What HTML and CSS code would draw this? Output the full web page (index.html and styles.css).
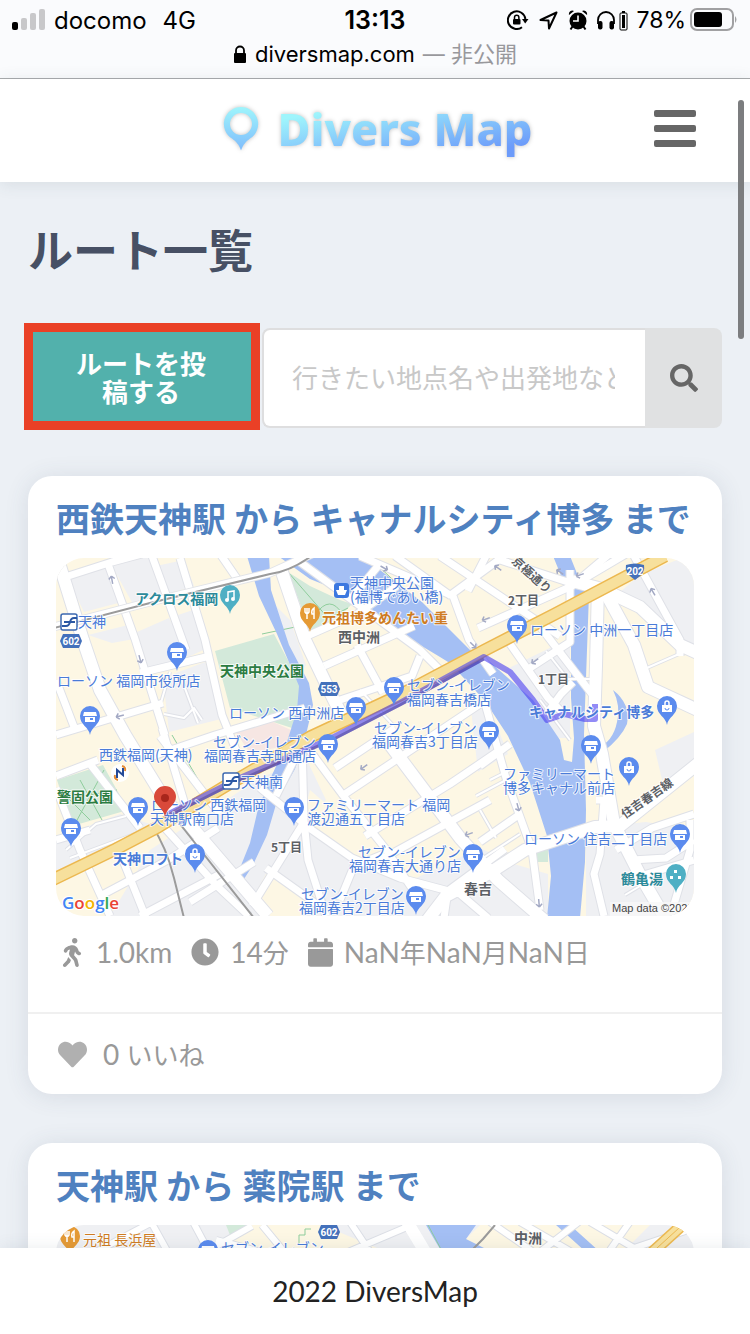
FILE: index.html
```html
<!DOCTYPE html>
<html lang="ja">
<head>
    <meta charset="UTF-8">
    <meta name="viewport" content="width=device-width, initial-scale=1.0">
    <title>Divers Map</title>
    <link rel="stylesheet" href="styles.css">
</head>
<body>
    <!-- ステータスバー -->
    <div class="browser-bar">
        <div class="status">
            <div class="status-left">
                <svg class="signal" width="34" height="22" viewBox="0 0 34 22">
                    <rect x="0" y="13" width="6" height="8" rx="2" fill="#000"/>
                    <rect x="9" y="9" width="6" height="12" rx="2" fill="#c8c8ca"/>
                    <rect x="18" y="4" width="6" height="17" rx="2" fill="#c8c8ca"/>
                    <rect x="27" y="0" width="6" height="21" rx="2" fill="#c8c8ca"/>
                </svg>
                <span>docomo</span>
                <span class="network">4G</span>
            </div>
            <time class="clock">13:13</time>
            <div class="status-right">
                <svg width="22" height="20" viewBox="0 0 22 20" fill="none" stroke="#000" stroke-width="2">
                    <path d="M15 17.2A8.8 8.8 0 1 1 18.4 9"/>
                    <path d="M15 9h6.500l-3.300 4.500z" fill="#000" stroke="none"/>
                    <rect x="6" y="9" width="7.500" height="5.500" rx="1" fill="#000" stroke="none"/>
                    <path d="M7.500 9V7.500a2.200 2.200 0 0 1 4.400 0V9" stroke-width="1.500"/>
                </svg>
                <svg class="arrow" width="19" height="19" viewBox="0 0 19 19" fill="none" stroke="#000" stroke-width="2" stroke-linejoin="round">
                    <path d="M17.500 1.500L1.500 9l8 .5.5 8z"/>
                </svg>
                <svg class="alarm" width="20" height="21" viewBox="0 0 20 21">
                    <circle cx="10" cy="11" r="8.500"/>
                    <path d="M4.500 16.500L2.500 19.500M15.500 16.500L17.500 19.500" stroke="#000" stroke-width="2"/>
                    <path d="M1 5a3.500 3.500 0 0 1 5-4zM19 5a3.500 3.500 0 0 0-5-4z"/>
                    <path d="M10 5.500V11H5" fill="none" stroke="#fff" stroke-width="1.600"/>
                </svg>
                <svg class="phones" width="32" height="21" viewBox="0 0 32 21">
                    <path d="M2 14v-4a8 8 0 0 1 16 0v4" fill="none" stroke="#000" stroke-width="1.800"/>
                    <rect x="2" y="11" width="4.500" height="8.500" rx="2"/>
                    <rect x="13.500" y="11" width="4.500" height="8.500" rx="2"/>
                    <rect x="24" y="3" width="7" height="17" rx="1" fill="none" stroke="#000"/>
                    <rect x="26" y="5" width="3" height="13"/>
                    <rect x="26" y="1" width="3" height="2"/>
                </svg>
                <span>78%</span>
                <svg width="48" height="24" viewBox="0 0 48 24">
                    <rect x="1" y="1" width="42" height="21" rx="6" fill="none" stroke="#a0a0a2" stroke-width="2"/>
                    <rect x="4" y="4" width="28" height="15" rx="3"/>
                    <path d="M45 8q3 3.500 0 7z" fill="#a0a0a2"/>
                </svg>
            </div>
        </div>
        <div class="address">
            <svg width="14" height="19" viewBox="0 0 14 19">
                <rect x="1" y="8" width="12" height="10" rx="1"/>
                <path d="M3 9V5.500a4 4 0 0 1 8 0V9" fill="none" stroke="#000" stroke-width="1.800"/>
            </svg>
            <span>diversmap.com</span>
            <span class="private">— 非公開</span>
        </div>
    </div>

    <!-- ヘッダー -->
    <header class="header">
        <a class="logo" href="#">
            <svg class="logo-pin" width="36" height="46" viewBox="0 0 36 46">
                <defs>
                    <linearGradient id="pinFill" x1="0" y1="0" x2="0" y2="1">
                        <stop offset="0" stop-color="#9ff5fc"/>
                        <stop offset="1" stop-color="#7fbcfc"/>
                    </linearGradient>
                </defs>
                <path fill="url(#pinFill)" fill-rule="evenodd" d="M18 1a17 17 0 0 1 9 31.500c-4 3-7 6-9 12-2-6-5-9-9-12A17 17 0 0 1 18 1zm0 6a11 11 0 1 0 0 22 11 11 0 0 0 0-22z"/>
            </svg>
            <span class="logo-text">Divers Map</span>
        </a>
        <button class="menu-button" type="button" aria-label="メニュー">
            <span></span>
            <span></span>
            <span></span>
        </button>
    </header>

    <main class="main">
        <h1 class="page-title">ルート一覧</h1>

        <!-- 投稿・検索 -->
        <form class="toolbar">
            <button class="post-button" type="button">ルートを投稿する</button>
            <input class="search-input" type="text" aria-label="ルート検索" placeholder="行きたい地点名や出発地など">
            <button class="search-button" type="submit" aria-label="検索">
                <svg width="28" height="28" viewBox="0 0 512 512"><path d="M505 442.700L405.300 343c-4.500-4.500-10.600-7-17-7H372c27.600-35.300 44-79.700 44-128C416 93.100 322.900 0 208 0S0 93.100 0 208s93.100 208 208 208c48.300 0 92.700-16.400 128-44v16.300c0 6.400 2.500 12.500 7 17l99.700 99.700c9.400 9.400 24.600 9.400 33.900 0l28.300-28.300c9.400-9.400 9.400-24.600.1-34zM208 336c-70.700 0-128-57.200-128-128 0-70.700 57.200-128 128-128 70.700 0 128 57.200 128 128 0 70.700-57.200 128-128 128z"/></svg>
            </button>
        </form>

        <!-- ルート 1 -->
        <article class="card">
            <div class="card-body">
                <h2 class="card-title"><a href="#">西鉄天神駅 から キャナルシティ博多 まで</a></h2>
                <svg class="map" viewBox="56 558 638 358" role="img" aria-label="西鉄天神駅からキャナルシティ博多までの地図">
                    <defs>
                        <g id="pin"><path d="M0 18C-1 10-10 8-10-1a10 10 0 0 1 20 0C10 8 1 10 0 18z"/></g>
                        <g id="shop">
                            <use href="#pin" fill="#5b8bee"/>
                            <path d="M-6-5H6L7-1H-7zM-5 0v5H5V0z" fill="#fff"/>
                            <path d="M0 1h3v2H0z" fill="#5b8bee"/>
                        </g>
                        <g id="bag">
                            <use href="#pin" fill="#5b8bee"/>
                            <path d="M-5-2H5V5H-5z" fill="#fff"/>
                            <path d="M-2-2v-2a2 2 0 0 1 4 0v2" fill="none" stroke="#fff" stroke-width="1.500"/>
                            <path d="M-2 1a2 2 0 0 0 4 0" fill="none" stroke="#5b8bee"/>
                        </g>
                        <g id="food">
                            <use href="#pin" fill="#e59a35"/>
                            <path d="M-5-6v4q2 3 4 0v-4M-3-6V5M4 5V-6q-3 2-2 6h2" fill="none" stroke="#fff" stroke-width="1.500"/>
                        </g>
                        <g id="metro">
                            <rect x="-8" y="-8" width="16" height="16" rx="2" fill="#fff" stroke="#3c68b0" stroke-width="1.500"/>
                            <path d="M-7 4h4q3 0 4-4t4-4h3M-5 0H6" fill="none" stroke="#2c58a4" stroke-width="2"/>
                        </g>
                        <path id="badge" d="M-8-7H8l3 7-3 7H-8l-3-7z" fill="#4471bb"/>
                        <path id="oneway" d="M-4 0h8M-4 0l3-3M-4 0l3 3" fill="none" stroke="#a3a9c4" stroke-width="1.500"/>
                        <g id="wide">
                            <path d="M60 566l23 74 17 50 25 45 40 65 25 25 78 91"/>
                            <path d="M282 572l23 68 25 52 14 28"/>
                            <path d="M598 586l-2 80-2 60 8 28 12 70 26 51 28 48"/>
                            <path d="M572 581l30 8 38 18 40 38 20 9"/>
                            <path d="M604 590l30 55 14 42 54 25"/>
                            <path d="M700 762l-80 64-25 1-70 23-34 22-45 24-20 26"/>
                            <path d="M388 742l27 36 45 60 38 42 46 40"/>
                        </g>
                        <g id="mid">
                            <path d="M62 578l50-16 30-8M108 564l27 75 30 96M152 556l16 44 18 50M180 558l25 82 17 75 14 35"/>
                            <path d="M140 673l70-17M56 735l107-32M150 757l65-22 90-27M216 548l22 32"/>
                            <path d="M307 636l50-22 40-28M324 666l90-40M357 645l26 48M340 700l72-24 8-20M300 562l120 88 20 20M350 600l28-34"/>
                            <path d="M360 556l93 40 16 44 24 34M452 594l52-38M395 556l56 40M440 556l120 80M478 628l94-42 54-32M486 556l-18 35"/>
                            <path d="M570 570v72l-40 26M510 644l38 54 16 16M535 620l60 78M545 716l16-22 12-12"/>
                            <path d="M634 556l46 84v16M500 560l74 24 40-34"/>
                            <path d="M484 700l22 78 26 72 8 60M480 766l30-22M480 842l40-28"/>
                            <path d="M596 800h8l-4 54-6 20 10 42M616 850l36-22 42-14M632 860l34-2 28-18M640 876l54-16M690 820v30l-20 68"/>
                            <path d="M260 788l52 42 40 28 48 20 60 16 28 24M308 748l37 50 40 50 28 42"/>
                            <path d="M335 768l60-40M345 794l135-90M365 836l85-52 50-34M380 860l110-60"/>
                            <path d="M304 740l-28 56M302 740l2 80 4 40 18 56M304 822l-52 84M266 868l56 40M340 900l14-34 30-12M448 890l-4 28M445 893l60-44"/>
                            <path d="M56 788l24 62 30 66M118 848l28 70M56 840l34-10M90 764l50 64M56 776l42-16M100 896l68-36 50-32M140 916l80-42M190 902l64-40"/>
                            <path d="M163 826l54 60 32 30M186 808l-24-80M160 736l60 78M56 680l20 52"/>
                        </g>
                        <g id="thin">
                            <path d="M160 706l10-34M164 714l20 4 10-10 8 12M180 675l18 48M546 651l22 28h28M640 671l46-20M480 810l16 28M520 834l-40 26M360 690l34 36"/>
                            <path d="M66 850l30-26 30-8M70 858l70-26M540 700l30 40M510 770l-20 10M476 796l30-16M625 895l30-18"/>
                        </g>
                        <path id="highway" d="M50 881l66-32 42-22 66-40 86-50 90-42 85-45 70-36 110-58"/>
                    </defs>

                    <rect x="56" y="558" width="638" height="358" fill="#fdf7e4"/>
                    <!-- 街区 -->
                    <path class="block" d="M68 580l40-14 14 36-38 10zM112 566l38-10 18 42-34 8zM156 566l28-6 10 26-26 8zM137 632l32-14 20 38-40 14zM172 617l24-8 14 38-22 10zM163 678l42-16 20 56-56 14zM88 635l40-10 6 14-22 4z"/>
                    <path class="block" d="M270 600l20 20 16 45-6 10zM505 670l65-32v100h-20l-30-48zM640 575l54-22v98l-20-8-30-30-30-16zM56 838l64-24 30 10-70 40-24 6z"/>
                    <path class="block" d="M150 850l110-72 46-20 20 42-24 26 60 34 50 20 68-32 34 16 34 10v42H110z"/>
                    <path class="block" d="M586 828l60-6 48 8v88H586zM655 750l39-18v30l-30 26zM470 700l22 14 16 40-30 18z"/>
                    <path fill="#fdf7e4" d="M268 870l50 28-16 18h-32l-14-24zM310 790l44 38-22 18-30-26zM480 770l34 4 24 56-20 4-30-14z"/>
                    <path fill="#f6e6e3" d="M233 728l29-11 40 18-12 10-40 8z"/>
                    <!-- 公園 -->
                    <path class="park" d="M215 651l59-17 26 49 2 23-10 22-62-20zM288 572l22 14 30 14 12 4-28 29-12 2zM57 780l46-15 25 45-56 16zM532 850h16v12h-14z"/>
                    <path class="trail" d="M62 800l55-10M80 780l22 40M76 822l28-52M60 790l30 30M262 600l-8-30M288 572l40 46 20-10M262 634l38-8M315 615q15-22 28 0M172 735l34 58M375 563l90 84"/>
                    <!-- 川 -->
                    <path class="water" d="M247 556h22l2 34 18 55 20 38 4 22-8 34-10 30-18 32-10 34-14 30-9 14-6-6 12-30 8-34 14-34 14-30 11-35 2-24-22-52-18-38z"/>
                    <path class="water" d="M278 556h76l26 14 42 32 52 52 16 8 43 38 27 40 4 20 8 2 2-24-3-40V600l-18-44h17l12 30 7 8-5 140 2 76-1 52-5 56h-33l4-42-4-40-17-53-22-47-23-35-24-26-8-10-13-8-40-24-60-42-30-12z"/>
                    <path class="water" d="M613 690q18 14 14 34-6 14-24 28l-6-4q16-6 20-26 4-16-4-32z"/>

                    <use href="#thin" class="road" stroke="#dfe1e7" stroke-width="4"/>
                    <use href="#mid" class="road" stroke="#dfe1e7" stroke-width="9"/>
                    <use href="#wide" class="road" stroke="#dfe1e7" stroke-width="14"/>
                    <use href="#thin" class="road" stroke="#fff" stroke-width="2"/>
                    <use href="#mid" class="road" stroke="#fff" stroke-width="7"/>
                    <use href="#wide" class="road" stroke="#fff" stroke-width="12"/>

                    <!-- 鉄道 -->
                    <path class="road" stroke="#e2e4e8" stroke-width="9" d="M50 628l100-26 120-29 44-20"/>
                    <path class="road" stroke="#fff" stroke-width="7" d="M50 628l100-26 120-29 44-20"/>
                    <path class="road" stroke="#9b9b9b" stroke-width="2" d="M50 629l100-26 120-29q22-3 44-20M152 826q14 20 22 52l10 40M180 824l74 94"/>

                    <use href="#highway" class="road" stroke="#ecb850" stroke-width="13"/>
                    <use href="#highway" class="road" stroke="#f7e09c" stroke-width="10"/>

                    <g class="arrows">
                        <use href="#oneway" transform="translate(112 580) rotate(80)"/>
                        <use href="#oneway" transform="translate(140 659) rotate(-105)"/>
                        <use href="#oneway" transform="translate(120 716) rotate(-15)"/>
                        <use href="#oneway" transform="translate(384 568) rotate(210)"/>
                        <use href="#oneway" transform="translate(473 645) rotate(225)"/>
                        <use href="#oneway" transform="translate(498 568) rotate(35)"/>
                        <use href="#oneway" transform="translate(560 572) rotate(35)"/>
                        <use href="#oneway" transform="translate(580 575) rotate(-20)"/>
                        <use href="#oneway" transform="translate(653 592) rotate(60)"/>
                        <use href="#oneway" transform="translate(486 619) rotate(-20)"/>
                        <use href="#oneway" transform="translate(535 661) rotate(-35)"/>
                        <use href="#oneway" transform="translate(364 767) rotate(-35)"/>
                        <use href="#oneway" transform="translate(469 834) rotate(-20)"/>
                        <use href="#oneway" transform="translate(518 807) rotate(-105)"/>
                        <use href="#oneway" transform="translate(539 903) rotate(-95)"/>
                    </g>

                    <!-- ルート -->
                    <path class="route" d="M165 816l75-38 90-39 70-36 84-46 26 15 23 28 14 20 18-6 20 5h10v-15"/>
                    <path class="route-edge" d="M165 818l75-38 90-39 70-36 84-46"/>

                    <!-- 駅・国道 -->
                    <use href="#metro" x="69" y="622"/>
                    <use href="#metro" x="231" y="781"/>
                    <rect x="334" y="583" width="15" height="15" rx="3" fill="#3c78e0"/>
                    <path d="M339 586h5v4h3l-2 5h-7l-2-5h3z" fill="#fff"/>
                    <use href="#badge" x="71" y="641"/>
                    <use href="#badge" x="329" y="689"/>
                    <path d="M626 565q9-3 18 0 2 8-9 15-11-7-9-15z" fill="#4471bb"/>
                    <g class="badge-text">
                        <text x="71" y="645">602</text>
                        <text x="329" y="693">553</text>
                        <text x="635" y="575">202</text>
                    </g>
                    <circle cx="120" cy="773" r="9" fill="#fff"/>
                    <path d="M117 778v-8l6 5v-7" fill="none" stroke="#254a98" stroke-width="2"/>
                    <path d="M122 766q4 1 3 5M118 780q-4-1-3-5" fill="none" stroke="#e48b33" stroke-width="2"/>

                    <g class="pins">
                        <use href="#shop" x="177" y="653"/>
                        <use href="#shop" x="90" y="717"/>
                        <use href="#shop" x="394" y="688"/>
                        <use href="#shop" x="356" y="708"/>
                        <use href="#shop" x="328" y="745"/>
                        <use href="#shop" x="517" y="626"/>
                        <use href="#shop" x="591" y="746"/>
                        <use href="#shop" x="489" y="732"/>
                        <use href="#shop" x="138" y="808"/>
                        <use href="#shop" x="71" y="829"/>
                        <use href="#shop" x="294" y="808"/>
                        <use href="#shop" x="473" y="855"/>
                        <use href="#shop" x="416" y="897"/>
                        <use href="#shop" x="680" y="835"/>
                        <use href="#bag" x="667" y="707"/>
                        <use href="#bag" x="629" y="768"/>
                        <use href="#bag" x="195" y="855"/>
                        <use href="#food" x="310" y="614"/>
                        <use href="#pin" x="230" y="596" fill="#4eafc4"/>
                        <path d="M228 600v-8l6-1v7" fill="none" stroke="#fff" stroke-width="1.500"/>
                        <circle cx="227" cy="600" r="2" fill="#fff"/>
                        <circle cx="233" cy="599" r="2" fill="#fff"/>
                        <use href="#pin" x="676" y="875" fill="#4eafc4"/>
                        <path d="M674 870h3v3h-3zM670 876h3v3h-3zM678 876h3v3h-3z" fill="#fff"/>
                    </g>

                    <!-- 地名 -->
                    <g class="label">
                        <text x="78" y="627">天神</text>
                        <text x="57" y="686">ローソン 福岡市役所店</text>
                        <text x="229" y="718">ローソン 西中洲店</text>
                        <text x="350" y="588">天神中央公園</text>
                        <text x="350" y="602">(福博であい橋)</text>
                        <text x="407" y="690">セブン-イレブン</text>
                        <text x="407" y="705">福岡春吉橋店</text>
                        <text x="374" y="733">セブン-イレブン</text>
                        <text x="372" y="747">福岡春吉3丁目店</text>
                        <text x="213" y="747">セブン-イレブン</text>
                        <text x="204" y="761">福岡春吉寺町通店</text>
                        <text x="530" y="635">ローソン 中洲一丁目店</text>
                        <text x="99" y="760">西鉄福岡(天神)</text>
                        <text x="241" y="787">天神南</text>
                        <text x="151" y="810">ローソン 西鉄福岡</text>
                        <text x="150" y="824">天神駅南口店</text>
                        <text x="307" y="810">ファミリーマート 福岡</text>
                        <text x="307" y="824">渡辺通五丁目店</text>
                        <text x="503" y="779">ファミリーマート</text>
                        <text x="503" y="793">博多キャナル前店</text>
                        <text x="358" y="857">セブン-イレブン</text>
                        <text x="349" y="871">福岡春吉大通り店</text>
                        <text x="301" y="899">セブン-イレブン</text>
                        <text x="299" y="913">福岡春吉2丁目店</text>
                        <text x="524" y="844">ローソン 住吉二丁目店</text>
                    </g>
                    <g class="label strong">
                        <text x="529" y="717">キャナルシティ博多</text>
                        <text x="113" y="864">天神ロフト</text>
                        <text class="teal" x="135" y="604">アクロス福岡</text>
                        <text class="teal" x="621" y="884">鶴亀湯</text>
                        <text class="green" x="220" y="676">天神中央公園</text>
                        <text class="green" x="57" y="802">警固公園</text>
                        <text class="orange" x="322" y="623">元祖博多めんたい重</text>
                    </g>
                    <g class="label area">
                        <text x="338" y="642">西中洲</text>
                        <text x="464" y="894">春吉</text>
                        <text class="small" x="508" y="605">2丁目</text>
                        <text class="small" x="538" y="684">1丁目</text>
                        <text class="small" x="271" y="852">5丁目</text>
                        <text class="small" transform="translate(511 562) rotate(42)">京極通り</text>
                        <text class="small" transform="translate(625 819) rotate(-35)">住吉春吉線</text>
                    </g>

                    <path d="M165 817c-1-9-11-12-11-20a11 11 0 0 1 22 0c0 8-10 11-11 20z" fill="#d9493a"/>
                    <circle cx="165" cy="798" r="4" fill="#a8261c"/>

                    <text class="google" x="62" y="909"><tspan fill="#4285f4">G</tspan><tspan fill="#ea4335">o</tspan><tspan fill="#f4b400">o</tspan><tspan fill="#4285f4">g</tspan><tspan fill="#34a853">l</tspan><tspan fill="#ea4335">e</tspan></text>
                    <rect x="610" y="902" width="84" height="14" fill="#f7f7f8" fill-opacity=".8"/>
                    <text class="credit" x="612" y="912">Map data ©2022</text>
                </svg>
                <ul class="meta">
                    <li>
                        <svg class="walk" width="20" height="29" viewBox="0 0 320 512"><path d="M208 96c26.500 0 48-21.500 48-48S234.500 0 208 0s-48 21.500-48 48 21.500 48 48 48zm94.500 149.100l-23.300-11.800-9.700-29.400c-14.700-44.600-55.700-75.800-102.200-75.900-36-.1-55.900 10.100-93.300 25.200-21.600 8.700-39.300 25.200-49.700 46.200L17.600 213c-7.800 15.800-1.500 35 14.200 42.900 15.600 7.900 34.600 1.500 42.500-14.300L81 228c3.500-7 9.300-12.500 16.500-15.400l26.800-10.800-15.200 60.700c-5.200 20.800.4 42.900 14.900 58.800l59.900 65.400c7.200 7.900 12.300 17.400 14.900 27.700l18.300 73.300c4.300 17.100 21.700 27.600 38.800 23.300 17.100-4.300 27.600-21.700 23.300-38.800l-22.200-89c-2.600-10.300-7.700-19.900-14.900-27.700l-45.500-49.700 17.200-68.700 5.500 16.500c5.300 16.100 16.700 29.400 31.700 37l23.300 11.800c15.600 7.900 34.600 1.500 42.500-14.300 7.700-15.700 1.400-35.100-14.300-43zM73.600 385.800c-3.200 8.100-8 15.400-14.200 21.500l-50 50.100c-12.500 12.500-12.500 32.800 0 45.300s32.700 12.500 45.200 0l59.400-59.400c6.100-6.100 10.900-13.400 14.200-21.500l13.500-33.800c-55.300-60.300-38.700-41.800-47.400-53.700l-20.700 51.500z"/></svg>
                        <span>1.0km</span>
                    </li>
                    <li>
                        <svg width="28" height="28" viewBox="0 0 512 512"><path d="M256,8C119,8,8,119,8,256S119,504,256,504,504,393,504,256,393,8,256,8Zm92.490,313h0l-20,25a16,16,0,0,1-22.490,2.500h0l-67-49.720a40,40,0,0,1-15-31.230V112a16,16,0,0,1,16-16h32a16,16,0,0,1,16,16V256l58,42.500A16,16,0,0,1,348.490,321Z"/></svg>
                        <span>14<span class="unit">分</span></span>
                    </li>
                    <li>
                        <svg width="25" height="29" viewBox="0 0 448 512"><path d="M12 192h424c6.600 0 12 5.400 12 12v260c0 26.500-21.500 48-48 48H48c-26.500 0-48-21.500-48-48V204c0-6.600 5.400-12 12-12zm436-44v-36c0-26.500-21.500-48-48-48h-48V12c0-6.600-5.400-12-12-12h-40c-6.600 0-12 5.400-12 12v52H160V12c0-6.600-5.400-12-12-12h-40c-6.600 0-12 5.400-12 12v52H48C21.500 64 0 85.500 0 112v36c0 6.600 5.400 12 12 12h424c6.600 0 12-5.400 12-12z"/></svg>
                        <span>NaN<span class="unit">年</span>NaN<span class="unit">月</span>NaN<span class="unit">日</span></span>
                    </li>
                </ul>
            </div>
            <div class="card-footer">
                <button class="like-button" type="button">
                    <svg width="29" height="29" viewBox="0 0 512 512"><path d="M462.300 62.600C407.500 15.900 326 24.300 275.700 76.200L256 96.500l-19.700-20.300C186.100 24.300 104.500 15.900 49.700 62.600c-62.800 53.600-66.100 149.800-9.900 207.900l193.500 199.800c12.500 12.900 32.800 12.900 45.300 0l193.500-199.800c56.300-58.100 53-154.300-9.800-207.900z"/></svg>
                    <span>0 <span class="unit">いいね</span></span>
                </button>
            </div>
        </article>

        <!-- ルート 2 -->
        <article class="card">
            <div class="card-body">
                <h2 class="card-title"><a href="#">天神駅 から 薬院駅 まで</a></h2>
                <svg class="map" viewBox="56 1225 638 358" role="img" aria-label="天神駅から薬院駅までの地図">
                    <rect x="56" y="1225" width="638" height="358" fill="#eff0f3"/>
                    <path fill="#fdf7e4" d="M222 1250l20-25h80l60 25zM480 1225h170l-30 30H450z"/>
                    <path class="park" d="M226 1225h24l-14 10h-6z"/>
                    <path class="water" d="M426 1225h50l-10 14 40 20h-60q-12-20-20-34zM556 1225h14l40 36h-14z"/>
                    <path class="trail" d="M299 1245v-10h6v-6h6M428 1225l14 26"/>
                    <g class="road" stroke="#dcdfe6" stroke-width="8">
                        <path d="M90 1255l68-36M150 1220l20 36M192 1260l60-34M208 1250l-16-30M216 1240l60 16M262 1225l28 34M334 1258l80-34M350 1222l24 36M490 1222l52 36M520 1222l62 36M536 1255l44-34M590 1222l44 26 60-20M610 1250l24-34"/>
                    </g>
                    <g class="road" stroke="#fff" stroke-width="6">
                        <path d="M90 1255l68-36M150 1220l20 36M192 1260l60-34M208 1250l-16-30M216 1240l60 16M262 1225l28 34M334 1258l80-34M350 1222l24 36M490 1222l52 36M520 1222l62 36M536 1255l44-34M590 1222l44 26 60-20M610 1250l24-34"/>
                    </g>
                    <path class="road" stroke="#fff" stroke-width="12" d="M406 1220l24 40"/>
                    <path class="road" stroke="#9b9b9b" stroke-width="2" d="M495 1225l-12 14-16 16"/>
                    <path class="road" stroke="#ecb850" stroke-width="12" d="M646 1258l44-40"/>
                    <path class="road" stroke="#f7e09c" stroke-width="9" d="M646 1258l44-40"/>
                    <path class="road" stroke="#ecb850" stroke-width="1" d="M646 1258l44-40"/>
                    <use href="#food" x="70" y="1237"/>
                    <use href="#shop" x="208" y="1251"/>
                    <use href="#badge" x="329" y="1232"/>
                    <text class="badge-text" x="329" y="1236">602</text>
                    <text class="label orange" x="83" y="1245">元祖 長浜屋</text>
                    <text class="label" x="221" y="1253">セブン-イレブン</text>
                    <text class="label area" x="514" y="1243">中洲</text>
                </svg>
            </div>
        </article>
    </main>

    <footer class="footer">2022 DiversMap</footer>
    <div class="scroll-thumb"></div>
</body>
</html>
```
FILE: styles.css
```css
* {
    box-sizing: border-box;
}

html, body {
    margin: 0;
    height: 100%;
}

body {
    display: flex;
    flex-direction: column;
    position: relative;
    overflow: hidden;
    background: #ecf0f5;
    color: #222;
    font-family: Lato, "Noto Sans CJK JP", sans-serif;
    font-size: 28px;
}

button {
    border: 0;
    padding: 0;
    background: none;
    font: inherit;
}

svg {
    display: block;
    flex: none;
}

/* ステータスバー */
.browser-bar {
    flex: none;
    background: #fafbfd;
    border-bottom: 1px solid #a9abad;
    color: #000;
    font-family: Inter, "Noto Sans CJK JP", sans-serif;
    font-size: 24px;
    padding-bottom: 10px;
}

.status {
    display: grid;
    grid-template-columns: 1fr auto 1fr;
    align-items: center;
    height: 40px;
    padding: 0 12px;
}

.status-left,
.status-right,
.address {
    display: flex;
    align-items: center;
}

.status-left {
    gap: 8px;
}

.network {
    margin-left: 8px;
}

.clock {
    font-size: 25px;
    font-weight: 600;
}

.status-right {
    justify-content: flex-end;
    gap: 8px;
}

.status-right span {
    font-size: 23px;
    margin-right: -4px;
}

.arrow {
    margin: 0 2px;
}

.address {
    justify-content: center;
    gap: 8px;
    height: 28px;
    font-size: 22px;
    line-height: 28px;
}

.private {
    color: #98989c;
}

/* ヘッダー */
.header {
    flex: none;
    display: grid;
    grid-template-columns: 1fr auto 1fr;
    align-items: center;
    height: 103px;
    padding: 0 54px 4px 60px;
    position: relative;
    z-index: 1;
    background: #fff;
    box-shadow: 0 2px 16px rgba(60, 80, 90, 0.12);
}

.logo {
    grid-column: 2;
    display: flex;
    align-items: center;
    gap: 18px;
    text-decoration: none;
    filter: drop-shadow(0 0 2px rgba(0, 0, 0, 0.25));
}

.logo-text {
    font-family: "Noto Sans", sans-serif;
    font-size: 45px;
    font-weight: 800;
    line-height: 60px;
    color: transparent;
    background: linear-gradient(170deg, #9ff5fc 20%, #6c9bfa 85%);
    -webkit-background-clip: text;
    background-clip: text;
}

.menu-button {
    justify-self: end;
    display: grid;
    gap: 8px;
    width: 42px;
}

.menu-button span {
    height: 7px;
    border-radius: 2px;
    background: #666;
}

/* メイン */
.main {
    flex: 1;
    min-height: 0;
    overflow: hidden;
    padding: 40px 28px 0;
}

.page-title {
    margin: 0 0 48px;
    color: #475064;
    font-size: 45px;
    line-height: 58px;
}

.toolbar {
    display: grid;
    grid-template-columns: 226px 1fr 77px;
    height: 100px;
    margin-bottom: 48px;
}

.post-button {
    position: relative;
    padding: 0 42px;
    background: #52b1ac;
    color: #fff;
    font-size: 26px;
    font-weight: 700;
    line-height: 28px;
}

/* 強調枠 */
.post-button::after {
    content: "";
    position: absolute;
    inset: -5px -6px -2px -4px;
    border: 9px solid #ea4026;
}

.search-input {
    min-width: 0;
    margin-left: 8px;
    padding: 0 30px 0 28px;
    border: 2px solid #dededf;
    border-right: 0;
    border-radius: 8px 0 0 8px;
    background: #fff;
    font: inherit;
    font-size: 26px;
}

.search-input::placeholder {
    color: #c8c8c8;
}

.search-button {
    display: grid;
    place-items: center;
    border-radius: 0 8px 8px 0;
    background: #e0e1e2;
    fill: #666;
}

/* カード */
.card {
    margin-bottom: 49px;
    border-radius: 24px;
    background: #fff;
    box-shadow: 0 2px 24px rgba(60, 75, 100, 0.12);
}

.card-body {
    padding: 18px 28px 40px;
}

.card-title {
    margin: 0 0 14px;
    font-size: 34px;
    line-height: 50px;
    white-space: nowrap;
}

.card-title a {
    color: #4f81c0;
    text-decoration: none;
}

.meta {
    display: flex;
    align-items: center;
    gap: 19px;
    height: 40px;
    margin: 16px 0 0;
    padding: 0;
    list-style: none;
    color: #999;
    fill: #999;
    line-height: 40px;
}

.meta li {
    display: flex;
    align-items: center;
    gap: 11px;
}

.unit {
    font-size: 26px;
}

.walk {
    margin: 0 3px 0 6px;
}

.card-footer {
    padding: 20px 30px;
    border-top: 2px solid #f0f0f0;
}

.like-button {
    display: flex;
    align-items: center;
    gap: 16px;
    height: 40px;
    color: #999;
    fill: #b0b0b0;
    line-height: 40px;
}

/* 地図 */
.map {
    width: 100%;
    border-radius: 28px;
    font-family: "Noto Sans CJK JP", sans-serif;
}

.block { fill: #eff0f3; }
.park { fill: #d3e9da; }
.water { fill: #a4bff4; }

.trail {
    fill: none;
    stroke: #8fcd9c;
    stroke-width: 1px;
}

.road {
    fill: none;
    stroke-linejoin: round;
}

.route {
    fill: none;
    stroke: #4a3df0;
    stroke-opacity: 0.6;
    stroke-width: 6px;
    stroke-linejoin: round;
}

.route-edge {
    fill: none;
    stroke: #4b4290;
    stroke-opacity: 0.5;
    stroke-width: 3px;
}

.label {
    fill: #4a7bd8;
    stroke: #fff;
    stroke-width: 2px;
    stroke-linejoin: round;
    stroke-opacity: 0.8;
    paint-order: stroke;
    font-size: 14px;
}

.strong {
    font-weight: 700;
}

.area {
    fill: #5c6065;
    font-weight: 700;
}

.small {
    font-size: 12px;
}

.teal { fill: #2c8a9a; }
.green { fill: #2b7c42; }
.orange { fill: #cf7c22; }

.badge-text {
    fill: #fff;
    font-family: Roboto, sans-serif;
    font-size: 10px;
    font-weight: 700;
    text-anchor: middle;
}

.google {
    font-family: "Open Sans", sans-serif;
    font-size: 17px;
    font-weight: 600;
    stroke: #fff;
    stroke-width: 2px;
    paint-order: stroke;
}

.credit {
    fill: #444;
    font-family: "Liberation Sans", sans-serif;
    font-size: 11px;
}

/* フッター */
.footer {
    flex: none;
    position: relative;
    padding: 23px 0;
    background: #fff;
    box-shadow: 0 0 16px rgba(60, 75, 100, 0.1);
    line-height: 40px;
    text-align: center;
}

.scroll-thumb {
    position: absolute;
    z-index: 2;
    top: 100px;
    right: 6px;
    width: 6px;
    height: 239px;
    border-radius: 3px;
    background: #7c7d7f;
}
```
